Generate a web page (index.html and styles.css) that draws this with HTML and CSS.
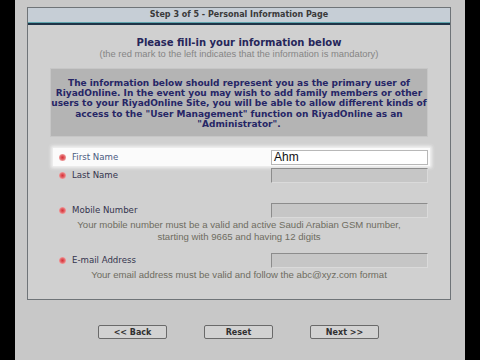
FILE: index.html
```html
<!DOCTYPE html>
<html lang="en">
<head>
    <meta charset="UTF-8">
    <title>Personal Information</title>
    <link rel="stylesheet" href="styles.css">
</head>
<body>
    <div class="screen">
        <div class="panel">
            <div class="panel-title">Step 3 of 5 - Personal Information Page</div>
            <div class="panel-body">
                <h1 class="form-heading">Please fill-in your information below</h1>
                <p class="form-note">(the red mark to the left indicates that the information is mandatory)</p>

                <div class="info-box">
                    The information below should represent you as the primary user of<br>
                    RiyadOnline. In the event you may wish to add family members or other<br>
                    users to your RiyadOnline Site, you will be able to allow different kinds of<br>
                    access to the "User Management" function on RiyadOnline as an<br>
                    "Administrator".
                </div>

                <div class="field-row active first">
                    <span class="mark"></span>
                    <label class="field-label">First Name</label>
                    <div class="field-input filled">Ahm</div>
                </div>
                <div class="field-row">
                    <span class="mark"></span>
                    <label class="field-label">Last Name</label>
                    <div class="field-input"></div>
                </div>

                <div class="field-row spaced">
                    <span class="mark"></span>
                    <label class="field-label">Mobile Number</label>
                    <div class="field-input"></div>
                </div>
                <p class="field-help">Your mobile number must be a valid and active Saudi Arabian GSM number,<br>starting with 9665 and having 12 digits</p>

                <div class="field-row email">
                    <span class="mark"></span>
                    <label class="field-label">E-mail Address</label>
                    <div class="field-input"></div>
                </div>
                <p class="field-help">Your email address must be valid and follow the abc@xyz.com format</p>
            </div>
        </div>

        <div class="button-bar">
            <button class="nav-button">&lt;&lt; Back</button>
            <button class="nav-button">Reset</button>
            <button class="nav-button">Next &gt;&gt;</button>
        </div>
    </div>
</body>
</html>
```

FILE: styles.css
```css
body {
    margin: 0;
    background-color: #000;
    font-family: 'DejaVu Sans', Verdana, sans-serif;
}

.screen {
    width: 450px;
    height: 360px;
    margin-left: 15px;
    background-color: #c8c8c8;
    padding-top: 7px;
    box-sizing: border-box;
    overflow: hidden;
}

/* Main panel */
.panel {
    width: 424px;
    height: 293px;
    margin-left: 12px;
    border: 1px solid #6f7478;
    box-sizing: border-box;
    background-color: #d0d0d0;
    display: flex;
    flex-direction: column;
}

.panel-title {
    height: 14px;
    line-height: 14px;
    background-color: #c6ced6;
    border-bottom: 1px solid #5fa5ad;
    box-shadow: 0 2px 0 #1f3448;
    margin-bottom: 2px;
    text-align: center;
    font-size: 8px;
    font-weight: bold;
    color: #3a3a3a;
}

.panel-body {
    display: flex;
    flex-direction: column;
    padding-top: 11px;
}

.form-heading {
    margin: 0;
    text-align: center;
    font-size: 10px;
    line-height: 13px;
    color: #26265a;
}

.form-note {
    margin: 0;
    text-align: center;
    font-family: 'Liberation Sans', Arial, sans-serif;
    font-size: 9.4px;
    line-height: 10px;
    color: #858585;
}

.info-box {
    margin: 9px 22px 0 22px;
    padding: 9px 0 7px 0;
    background-color: #b4b4b4;
    border: 1px solid #c6c6c6;
    text-align: center;
    font-size: 9px;
    font-weight: bold;
    line-height: 10.2px;
    color: #262666;
    white-space: nowrap;
}

/* Form rows */
.field-row {
    display: flex;
    align-items: center;
    height: 18px;
    margin-left: 25px;
    width: 377px;
    box-sizing: border-box;
    padding-left: 6px;
}

.field-row.first {
    margin-top: 11px;
}

.field-row.spaced {
    margin-top: 17px;
}

.field-row.email {
    margin-top: 8px;
}

.field-row.active {
    background-color: #fbfbfb;
    box-shadow: 0 0 3px 2px #f2f2f2;
}

.mark {
    width: 7px;
    height: 7px;
    border-radius: 50%;
    background: radial-gradient(circle, #d8323a 0, #e05a5e 35%, #f0a8a8 75%, rgba(240, 180, 180, 0.4) 100%);
    margin-right: 6px;
}

.field-label {
    flex: 1;
    font-size: 8.6px;
    color: #34344e;
}

.active .field-label {
    color: #4a5a80;
}

.field-input {
    width: 157px;
    height: 15px;
    box-sizing: border-box;
    background-color: #c6c6c6;
    border: 1px solid #8c8c8c;
    border-right-color: #dadada;
    border-bottom-color: #dadada;
    margin-right: 2px;
}

.field-input.filled {
    background-color: #fff;
    border: 1px solid #b8b8b8;
    font-family: 'Liberation Sans', Arial, sans-serif;
    font-size: 12px;
    line-height: 13px;
    padding-left: 2px;
    color: #111;
}

.field-help {
    margin: 0;
    text-align: center;
    font-family: 'Liberation Sans', Arial, sans-serif;
    font-size: 9.6px;
    line-height: 12px;
    color: #6e6c60;
}

/* Buttons */
.button-bar {
    display: flex;
    gap: 37px;
    margin-top: 25px;
    padding-left: 83px;
}

.nav-button {
    width: 69px;
    height: 14px;
    padding: 0;
    background-color: #d2d2d2;
    border: 1px solid #6a6a6a;
    border-radius: 2px;
    font-family: 'DejaVu Sans', Verdana, sans-serif;
    font-size: 8px;
    font-weight: bold;
    color: #303030;
}
```
